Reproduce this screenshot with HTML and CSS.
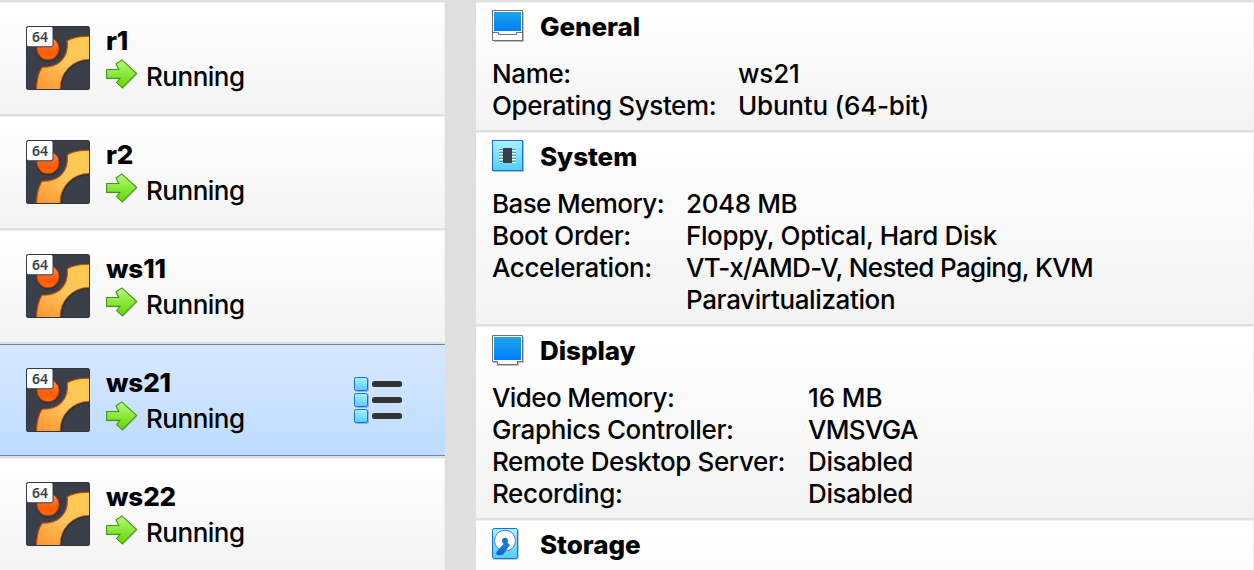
FILE: index.html
```html
<!DOCTYPE html>
<html lang="en">
<head>
<meta charset="utf-8">
<title>Virtual machines</title>
<link rel="stylesheet" href="styles.css">
</head>
<body>
<svg class="defs" width="0" height="0" aria-hidden="true">
  <defs>
    <linearGradient id="gold" x1="0.8" y1="0" x2="0.2" y2="1"><stop offset="0" stop-color="#ffc94f"/><stop offset=".5" stop-color="#ffc65a"/><stop offset="1" stop-color="#ff9a35"/></linearGradient>
    <linearGradient id="ball" x1="0" y1="0" x2="0" y2="1"><stop offset="0" stop-color="#ff9058"/><stop offset=".5" stop-color="#ff6418"/><stop offset=".75" stop-color="#ff5a00"/><stop offset="1" stop-color="#ff7a10"/></linearGradient>
    <linearGradient id="green" x1="0" y1="0" x2="0" y2="1"><stop offset="0" stop-color="#b2fb78"/><stop offset="1" stop-color="#62d600"/></linearGradient>
    <linearGradient id="screen" x1="0" y1="0" x2="0" y2="1"><stop offset="0" stop-color="#1ca6e6"/><stop offset="1" stop-color="#007cff"/></linearGradient>
    <linearGradient id="aqua" x1="0" y1="0" x2="0" y2="1"><stop offset="0" stop-color="#aaf0ff"/><stop offset="1" stop-color="#52cdff"/></linearGradient>
    <linearGradient id="arm" x1="0" y1="0" x2="0" y2="1"><stop offset="0" stop-color="#2585e5"/><stop offset="1" stop-color="#0b5fc9"/></linearGradient>
  </defs>
  <symbol id="os" viewBox="0 0 64 64">
    <rect width="64" height="64" rx="2.5" fill="#303641"/>
    <rect x="1" y="1" width="62" height="62" rx="1.5" fill="#3a3f49"/>
    <circle cx="22.3" cy="23.300" r="12.4" fill="#252932" opacity=".5"/>
    <circle cx="22" cy="22.500" r="11.2" fill="url(#ball)" stroke="#b83204"/>
    <path d="M63 34.500A28 28 0 0 0 35.300 63" fill="none" stroke="#20242c" stroke-opacity=".4" stroke-width="2.200"/>
    <path d="M10.500 63C10.800 54 12.600 46 16.300 41C31 42 43 33 41.200 14.800C47 11.500 54 10.300 63 10.300V33.300A29 29 0 0 0 34 63Z" fill="url(#gold)"/>
    <path d="M10.500 63C10.800 54 12.600 46 16.300 41C31 42 43 33 41.200 14.800C47 11.500 54 10.300 63 10.300" fill="none" stroke="#c84808" stroke-width="1.100"/>
    <path d="M63 33.300A29 29 0 0 0 34 63" fill="none" stroke="#c8660c" stroke-width=".8"/>
    <path d="M.5 2.500Q.5 .5 2.500 .5H25Q27 .5 27 2.500V18.800Q27 20.800 25 20.800H2.500Q.5 20.800 .5 18.800Z" fill="#fff" stroke="#343a45"/>
  </symbol>
  <symbol id="arrow" viewBox="0 0 34 32">
    <path d="M1.500 11.300H13.200L10.700 5.900L16.300 1.800L31.500 15.500L17 30L11.300 24.600L14.500 20.300H1.500Z" fill="#000" opacity=".18"/>
    <path d="M.6 10.500H12.800L10 5L15.800 .9L30.600 14.300L16.300 28.800L10.600 23.700L13.900 19.400H.6Z" fill="url(#green)" stroke="#46921a" stroke-width="1.100"/>
  </symbol>
  <symbol id="monitor" viewBox="0 0 32 32">
    <path d="M2 31.500H31.500V2" fill="none" stroke="#000" stroke-opacity=".25"/>
    <rect x=".5" y=".5" width="30" height="30" fill="#fff" stroke="#707070"/>
    <rect x="2" y="2" width="27" height="19" fill="url(#screen)"/>
    <path d="M0 22.500H6.500V24.500H24.500V22.500H31" fill="none" stroke="#707070"/>
  </symbol>
  <symbol id="display" viewBox="0 0 32 32">
    <path d="M1 27.500H5.500V30.500H26.500V27.500H31.500V2" fill="none" stroke="#000" stroke-opacity=".25"/>
    <path d="M.5 .5H30.500V26.500H25.500V29.500H5.500V26.500H.5Z" fill="#fff" stroke="#707070"/>
    <rect x="2" y="2" width="27" height="23" fill="url(#screen)"/>
  </symbol>
</svg>
<div class="window">
  <nav class="machines">
    <div class="machine"><svg class="os"><use href="#os"/><text x="14" y="15.700" text-anchor="middle" class="bits">64</text></svg><div class="info"><b>r1</b><div class="state"><svg class="arrow"><use href="#arrow"/></svg><span>Running</span></div></div></div>
    <div class="machine"><svg class="os"><use href="#os"/><text x="14" y="15.700" text-anchor="middle" class="bits">64</text></svg><div class="info"><b>r2</b><div class="state"><svg class="arrow"><use href="#arrow"/></svg><span>Running</span></div></div></div>
    <div class="machine"><svg class="os"><use href="#os"/><text x="14" y="15.700" text-anchor="middle" class="bits">64</text></svg><div class="info"><b>ws11</b><div class="state"><svg class="arrow"><use href="#arrow"/></svg><span>Running</span></div></div></div>
    <div class="machine selected"><svg class="os"><use href="#os"/><text x="14" y="15.700" text-anchor="middle" class="bits">64</text></svg><div class="info"><b>ws21</b><div class="state"><svg class="arrow"><use href="#arrow"/></svg><span>Running</span></div></div>
      <svg class="menu" viewBox="0 0 50 48">
        <g fill="#000" opacity=".2"><rect x="1" y="1" width="14" height="14" rx="2"/><rect x="1" y="17" width="14" height="14" rx="2"/><rect x="1" y="33" width="14" height="14" rx="2"/></g>
        <g fill="url(#aqua)" stroke="#1470dc"><rect x=".5" y=".5" width="13" height="13" rx="1.800"/><rect x=".5" y="16.500" width="13" height="13" rx="1.800"/><rect x=".5" y="32.500" width="13" height="13" rx="1.800"/></g>
        <g fill="#333"><rect x="18" y="4" width="30" height="6" rx="2.500"/><rect x="18" y="20" width="30" height="6" rx="2.500"/><rect x="18" y="36" width="30" height="6" rx="2.500"/></g>
      </svg>
    </div>
    <div class="machine"><svg class="os"><use href="#os"/><text x="14" y="15.700" text-anchor="middle" class="bits">64</text></svg><div class="info"><b>ws22</b><div class="state"><svg class="arrow"><use href="#arrow"/></svg><span>Running</span></div></div></div>
  </nav>
  <main class="details">
    <section class="general">
      <h2><svg><use href="#monitor"/></svg><span>General</span></h2>
      <dl><dt>Name:</dt><dd>ws21</dd><dt>Operating System:</dt><dd>Ubuntu (64-bit)</dd></dl>
    </section>
    <section class="system">
      <h2><svg viewBox="0 0 32 32"><path d="M1 31.500H31.500V1" fill="none" stroke="#000" stroke-opacity=".25"/><rect x=".5" y=".5" width="30" height="30" fill="url(#aqua)" stroke="#1470dc"/><path d="M7 10.500H24M7 13.500H24M7 16.500H24M7 19.500H24M7 22.500H24" stroke="#fff"/><path d="M7 9.500H24M7 12.500H24M7 15.500H24M7 18.500H24M7 21.500H24" stroke="#5790b0" stroke-width=".9"/><rect x="11" y="8" width="9" height="15" fill="#373c48"/></svg><span>System</span></h2>
      <dl><dt class="snug">Base Memory:</dt><dd>2048 MB</dd><dt>Boot Order:</dt><dd>Floppy, Optical, Hard Disk</dd><dt>Acceleration:</dt><dd><span class="tight">VT-x/AMD-V, Nested Paging, KVM</span><br>Paravirtualization</dd></dl>
    </section>
    <section class="display">
      <h2><svg><use href="#display"/></svg><span>Display</span></h2>
      <dl><dt class="snug">Video Memory:</dt><dd class="loose">16 MB</dd><dt>Graphics Controller:</dt><dd class="tight">VMSVGA</dd><dt>Remote Desktop Server:</dt><dd>Disabled</dd><dt>Recording:</dt><dd>Disabled</dd></dl>
    </section>
    <section class="storage">
      <h2><svg viewBox="0 0 32 32"><rect x="1" y="1" width="26" height="31" rx="2" fill="#000" opacity=".2"/><rect x=".5" y=".5" width="25" height="30" rx="1.800" fill="url(#aqua)" stroke="#1470dc"/><circle cx="13" cy="12.700" r="10.500" fill="#fff" stroke="#3582dd"/><path d="M14 13L18 17L11 26.500Q6 28 4.500 26.500Q3.500 24 7 21Z" fill="url(#arm)"/><circle cx="13" cy="12.700" r="2.900" fill="#1870d5"/></svg><span>Storage</span></h2>
    </section>
  </main>
</div>
</body>
</html>
```
FILE: styles.css
```css
* { box-sizing: border-box; }
body { margin: 0; overflow: hidden; background: #dfdfdf; color: #000; font: 460 26px/32px Inter, "Liberation Sans", sans-serif; }
.defs { position: absolute; }
.window { display: grid; grid-template-columns: 445px 1fr; column-gap: 31px; height: 570px; padding-top: 2px; overflow: hidden; }
.machines, .details { display: flex; flex-direction: column; gap: 2px; }
.machine { display: flex; flex: none; height: 112px; padding: 23px 0 0 26px; background: linear-gradient(#fff, #f3f3f3); border: solid #f1f1f1; border-width: 1px 1px 0 0; }
.machine.selected { background: linear-gradient(#d7e8ff, #bddcff); border: solid #6885b2; border-width: 1px 0; }
.os { width: 64px; height: 64px; flex: none; }
.bits { font: 600 14px "Noto Sans", sans-serif; fill: #3a404a; }
.info { margin-left: 16px; width: 180px; }
.info b { display: block; height: 32px; line-height: 30px; letter-spacing: -.1px; font-weight: 780; }
.state { display: flex; height: 36px; }
.state span { margin: 3px 0 0 6px; letter-spacing: -.5px; }
.arrow { width: 34px; height: 32px; margin-top: 1px; flex: none; }
.menu { width: 50px; height: 48px; margin: 9px 0 0 68px; }
.details section { flex: none; padding: 7px 0 0 16px; background: linear-gradient(#fff, #f3f3f3); border: solid #f0f0f0; border-width: 1px 1px 0 0; }
.general { height: 128px; }
.system, .display, .storage { height: 192px; }
h2 { display: flex; gap: 16px; margin: 0; height: 48px; font-size: 26px; line-height: 34px; font-weight: 780; letter-spacing: -.05px; }
h2 svg { width: 32px; height: 32px; flex: none; }
.display h2 svg { margin-top: 1px; }
dl { display: grid; margin: 0; grid-auto-rows: minmax(32px, auto); letter-spacing: -.38px; white-space: nowrap; }
dd { margin: 0; }
.snug { letter-spacing: -.6px; }
.tight { letter-spacing: -.66px; }
.loose { letter-spacing: -.1px; }
.general dl { grid-template-columns: 246px 1fr; }
.general dd { letter-spacing: -.2px; }
.system dl { grid-template-columns: 194px 1fr; }
.display dl { grid-template-columns: 316px 1fr; }
```
